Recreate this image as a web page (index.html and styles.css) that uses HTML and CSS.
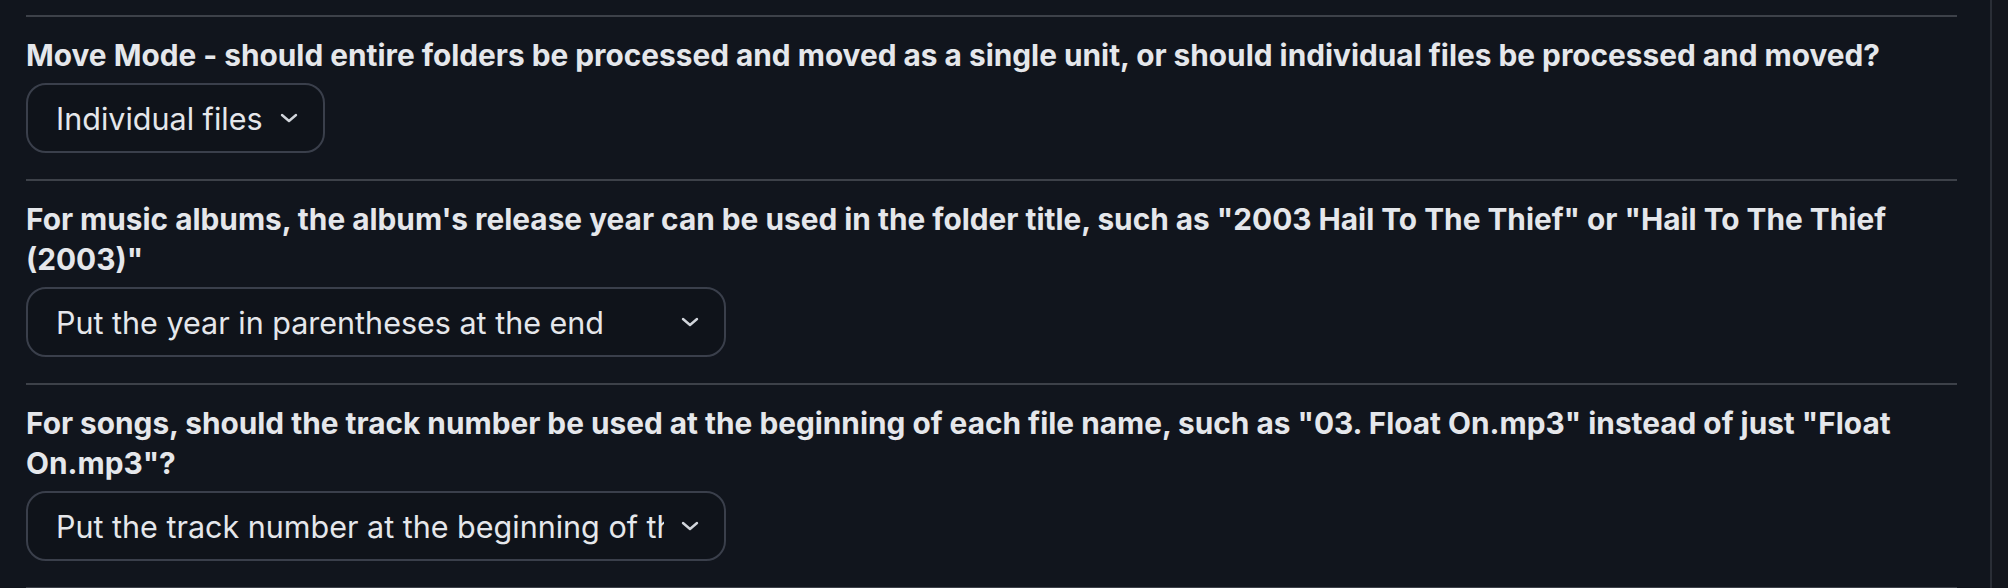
FILE: index.html
```html
<!DOCTYPE html>
<html lang="en">
<head>
<meta charset="utf-8">
<title>Settings</title>
<link rel="stylesheet" href="styles.css">
</head>
<body>
<div class="page">
  <main class="main">
    <section class="setting">
      <label class="setting-title">Move Mode - should entire folders be processed and moved as a single unit, or should individual files be processed and moved?</label>
      <div class="select">
        <span class="select-value">Individual files</span>
        <svg class="chevron" viewBox="0 0 18 10" aria-hidden="true"><path d="M2 2 L9 8 L16 2"/></svg>
      </div>
    </section>
    <section class="setting">
      <label class="setting-title">For music albums, the album's release year can be used in the folder title, such as "2003 Hail To The Thief" or "Hail To The Thief (2003)"</label>
      <div class="select select-wide">
        <span class="select-value">Put the year in parentheses at the end</span>
        <svg class="chevron" viewBox="0 0 18 10" aria-hidden="true"><path d="M2 2 L9 8 L16 2"/></svg>
      </div>
    </section>
    <section class="setting">
      <label class="setting-title">For songs, should the track number be used at the beginning of each file name, such as "03. Float On.mp3" instead of just "Float On.mp3"?</label>
      <div class="select select-wide">
        <span class="select-value">Put the track number at the beginning of the file name</span>
        <svg class="chevron" viewBox="0 0 18 10" aria-hidden="true"><path d="M2 2 L9 8 L16 2"/></svg>
      </div>
    </section>
    <div class="setting setting-end"></div>
  </main>
  <div class="gutter"></div>
</div>
</body>
</html>
```
FILE: styles.css
```css
* { box-sizing: border-box; }
html, body { margin: 0; height: 100%; }
body {
  background: #11151d;
  color: #e5e7eb;
  font-family: Inter, "Noto Sans", sans-serif;
  overflow: hidden;
}
.page {
  display: flex;
  height: 588px;
}
.main {
  flex: 1;
  padding: 15px 33px 0 26px;
  border-right: 2px solid #2a2e36;
}
.gutter {
  width: 16px;
  background: #13161d;
}
.setting {
  display: flex;
  flex-direction: column;
  align-items: flex-start;
  gap: 8px;
  border-top: 2px solid #3d4149;
  padding: 18px 0 26px;
}
.setting-end { padding: 0; }
.setting-title {
  font-size: 29.8px;
  font-weight: 700;
  line-height: 40px;
  color: #e5e7eb;
}
.select {
  display: inline-flex;
  align-items: center;
  gap: 17px;
  height: 70px;
  padding: 0 25px 0 28px;
  border: 2px solid #3a3f4b;
  border-radius: 20px;
  background: #0f131a;
  font-size: 30.5px;
  color: #e5e7eb;
}
.select-wide { width: 700px; }
.select-value {
  flex: 1;
  white-space: nowrap;
  overflow: hidden;
}
.chevron {
  width: 18px;
  height: 10px;
  flex: none;
  fill: none;
  stroke: #d1d5db;
  stroke-width: 2.4;
  stroke-linecap: round;
  stroke-linejoin: round;
}
```
